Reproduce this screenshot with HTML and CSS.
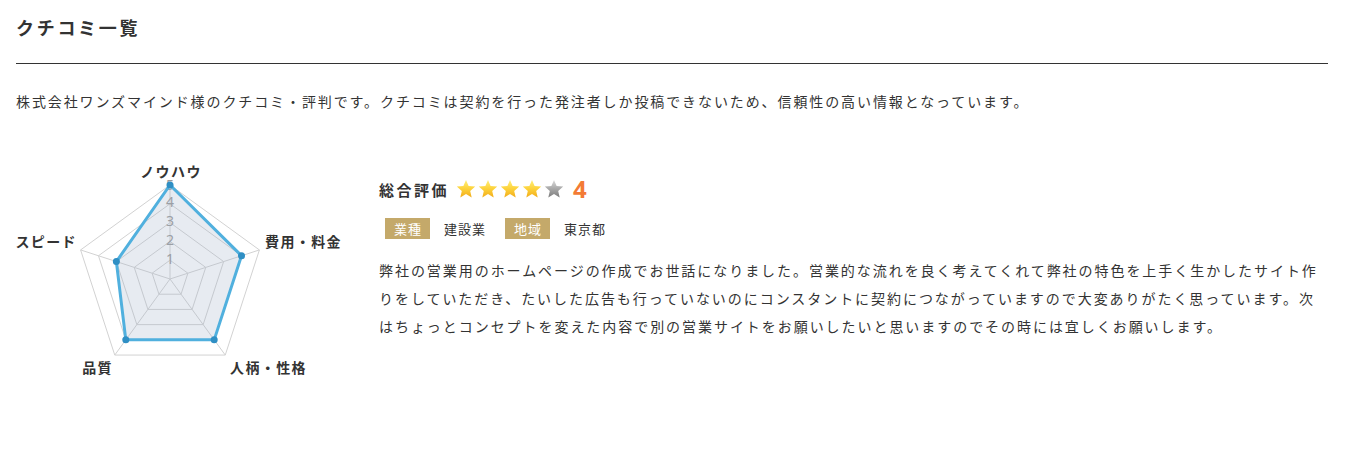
FILE: index.html
```html
<!DOCTYPE html>
<html lang="ja">
<head>
<meta charset="utf-8">
<title>クチコミ一覧</title>
<link rel="stylesheet" href="styles.css">
</head>
<body>
<div class="page">
  <h2 class="title">クチコミ一覧</h2>
  <p class="lead">株式会社ワンズマインド様のクチコミ・評判です。クチコミは契約を行った発注者しか投稿できないため、信頼性の高い情報となっています。</p>
  <section class="review">
    <svg class="radar" width="344" height="240" viewBox="0 0 344 240">
      <g class="grid">
        <polygon points="154,110.2 171.88,123.19 165.05,144.21 142.95,144.21 136.12,123.19"/>
        <polygon points="154,91.4 189.76,117.38 176.10,159.42 131.90,159.42 118.24,117.38"/>
        <polygon points="154,72.6 207.64,111.57 187.15,174.63 120.85,174.63 100.36,111.57"/>
        <polygon points="154,53.8 225.52,105.76 198.20,189.84 109.80,189.84 82.48,105.76"/>
        <polygon points="154,35 243.40,99.95 209.25,205.05 98.75,205.05 64.60,99.95"/>
        <line x1="154" y1="129" x2="154" y2="35"/>
        <line x1="154" y1="129" x2="243.40" y2="99.95"/>
        <line x1="154" y1="129" x2="209.25" y2="205.05"/>
        <line x1="154" y1="129" x2="98.75" y2="205.05"/>
        <line x1="154" y1="129" x2="64.60" y2="99.95"/>
      </g>
      <g class="ticks">
        <text x="154" y="108.2">1</text>
        <text x="154" y="89.4">2</text>
        <text x="154" y="70.6">3</text>
        <text x="154" y="51.8">4</text>
        <text x="154" y="34">5</text>
      </g>
      <polygon class="area" points="154,35 225.52,105.76 198.20,189.84 109.80,189.84 100.36,111.57"/>
      <g class="dots">
        <circle cx="154" cy="35" r="3.5"/>
        <circle cx="225.52" cy="105.76" r="3.5"/>
        <circle cx="198.20" cy="189.84" r="3.5"/>
        <circle cx="109.80" cy="189.84" r="3.5"/>
        <circle cx="100.36" cy="111.57" r="3.5"/>
      </g>
      <g class="axis-labels">
        <text x="155" y="21" text-anchor="middle">ノウハウ</text>
        <text x="249" y="91" text-anchor="start">費用・料金</text>
        <text x="214" y="217" text-anchor="start">人柄・性格</text>
        <text x="97" y="217" text-anchor="end">品質</text>
        <text x="61" y="91" text-anchor="end">スピード</text>
      </g>
    </svg>
    <div class="detail">
      <div class="score">
        <span class="score-label">総合評価</span>
        <span class="stars">
          <svg class="star" width="20" height="20" viewBox="0 0 20 20"><defs><linearGradient id="gold" x1="0" y1="0" x2="0" y2="1"><stop offset="0" stop-color="#fff07a"/><stop offset="0.5" stop-color="#fdd23a"/><stop offset="1" stop-color="#f2ad1c"/></linearGradient><linearGradient id="gray" x1="0" y1="0" x2="0" y2="1"><stop offset="0" stop-color="#dcdcdc"/><stop offset="0.5" stop-color="#a8a8a8"/><stop offset="1" stop-color="#7c7c7c"/></linearGradient></defs><polygon fill="url(#gold)" points="10,1 12.6,7.1 19.2,7.6 14.2,11.9 15.7,18.4 10,15 4.3,18.4 5.8,11.9 0.8,7.6 7.4,7.1"/></svg>
          <svg class="star" width="20" height="20" viewBox="0 0 20 20"><polygon fill="url(#gold)" points="10,1 12.6,7.1 19.2,7.6 14.2,11.9 15.7,18.4 10,15 4.3,18.4 5.8,11.9 0.8,7.6 7.4,7.1"/></svg>
          <svg class="star" width="20" height="20" viewBox="0 0 20 20"><polygon fill="url(#gold)" points="10,1 12.6,7.1 19.2,7.6 14.2,11.9 15.7,18.4 10,15 4.3,18.4 5.8,11.9 0.8,7.6 7.4,7.1"/></svg>
          <svg class="star" width="20" height="20" viewBox="0 0 20 20"><polygon fill="url(#gold)" points="10,1 12.6,7.1 19.2,7.6 14.2,11.9 15.7,18.4 10,15 4.3,18.4 5.8,11.9 0.8,7.6 7.4,7.1"/></svg>
          <svg class="star" width="20" height="20" viewBox="0 0 20 20"><polygon fill="url(#gray)" points="10,1 12.6,7.1 19.2,7.6 14.2,11.9 15.7,18.4 10,15 4.3,18.4 5.8,11.9 0.8,7.6 7.4,7.1"/></svg>
        </span>
        <span class="score-value">4</span>
      </div>
      <div class="tags">
        <span class="tag">業種</span><span class="tag-value">建設業</span>
        <span class="tag">地域</span><span class="tag-value">東京都</span>
      </div>
      <p class="comment">弊社の営業用のホームページの作成でお世話になりました。営業的な流れを良く考えてくれて弊社の特色を上手く生かしたサイト作りをしていただき、たいした広告も行っていないのにコンスタントに契約につながっていますので大変ありがたく思っています。次<br>はちょっとコンセプトを変えた内容で別の営業サイトをお願いしたいと思いますのでその時には宜しくお願いします。</p>
    </div>
  </section>
</div>
</body>
</html>
```

FILE: styles.css
```css
* { box-sizing: border-box; }
html, body {
  margin: 0;
  padding: 0;
  background: #fff;
}
body {
  font-family: "Noto Sans CJK JP", "Noto Sans", sans-serif;
  color: #333;
}
.page {
  padding: 0 32px 0 16px;
}
.title {
  margin: 0;
  padding: 14px 0 22px;
  font-size: 18px;
  line-height: 27px;
  font-weight: 700;
  letter-spacing: 2.7px;
  color: #333;
  border-bottom: 1px solid #333;
}
.lead {
  margin: 25px 0 0;
  font-size: 14px;
  line-height: 24px;
  letter-spacing: 1.9px;
}
.review {
  display: flex;
  align-items: flex-start;
  gap: 19px;
  margin-top: 37px;
}
.radar {
  flex: 0 0 auto;
  display: block;
  overflow: visible;
}
.grid polygon, .grid line {
  fill: none;
  stroke: #d2d2d2;
  stroke-width: 1;
}
.ticks text {
  font-family: "Noto Sans", "Noto Sans CJK JP", sans-serif;
  font-size: 14px;
  fill: #9a9a9a;
  text-anchor: middle;
  dominant-baseline: central;
}
.area {
  fill: rgba(160, 175, 200, 0.25);
  stroke: #50b0de;
  stroke-width: 3;
  stroke-linejoin: miter;
}
.dots circle {
  fill: #2f8fc4;
}
.axis-labels text {
  font-family: "Noto Sans CJK JP", sans-serif;
  font-size: 14px;
  font-weight: 700;
  fill: #333;
  letter-spacing: 1.4px;
  dominant-baseline: central;
}
.detail {
  flex: 1 1 auto;
  min-width: 0;
  padding-top: 24px;
}
.score {
  display: flex;
  align-items: center;
  height: 30px;
}
.score-label {
  font-size: 15px;
  font-weight: 700;
  letter-spacing: 2.5px;
  margin-right: 7px;
}
.stars {
  display: flex;
  gap: 2px;
}
.star {
  display: block;
}
.score-value {
  margin-left: 9px;
  font-family: "Noto Sans", "Noto Sans CJK JP", sans-serif;
  font-size: 24px;
  font-weight: 700;
  line-height: 30px;
  color: #f37b35;
}
.tags {
  display: flex;
  align-items: center;
  margin-top: 14px;
  margin-left: 6px;
}
.tag {
  background: #c4a96a;
  color: #fff;
  font-size: 13px;
  line-height: 21px;
  padding: 0 8px 0 9px;
  letter-spacing: 1px;
  margin-right: 14px;
}
.tag-value {
  font-size: 13px;
  line-height: 21px;
  letter-spacing: 1px;
  margin-right: 19px;
}
.comment {
  margin: 17px 0 0;
  font-size: 14px;
  line-height: 28px;
  letter-spacing: 1.95px;
}
```
